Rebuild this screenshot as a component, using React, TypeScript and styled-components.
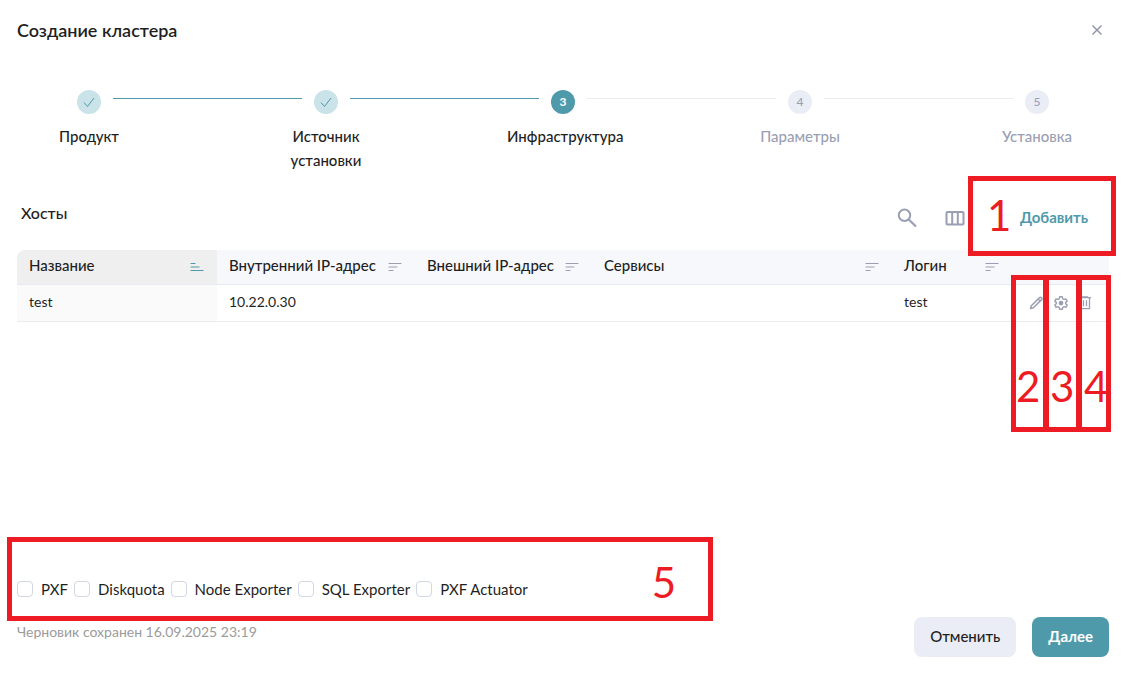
import React from "react";
import styled, { createGlobalStyle } from "styled-components";

const teal = "#4f9aaa";
const muted = "#9a9fb3";
const ink = "#1f1f1f";
const red = "#ed1c24";

const GlobalStyle = createGlobalStyle`
  *, *::before, *::after { box-sizing: border-box; }
  body { margin: 0; background: #fff; }
  body, button, input { font-family: Lato, "Noto Sans", sans-serif; }
`;

const Dialog = styled.main`
  display: flex;
  flex-direction: column;
  min-height: 100vh;
  padding: 18px 21px 18px 17px;
  color: ${ink};
  font-size: 14px;
  line-height: 24px;
`;

const Header = styled.header`
  display: flex;
  align-items: center;
  justify-content: space-between;
`;

const Title = styled.h1`
  margin: 0;
  font-size: 18px;
  font-weight: 600;
`;

const IconButton = styled.button<{ $size: number }>`
  display: flex;
  align-items: center;
  justify-content: center;
  width: ${(p) => p.$size}px;
  height: ${(p) => p.$size}px;
  padding: 0;
  border: 0;
  background: none;
  color: ${muted};
  cursor: pointer;
`;

const Stepper = styled.ol`
  display: flex;
  margin: 48px 0 0;
  padding: 0;
  list-style: none;
`;

const StepItem = styled.li`
  flex: 1;
  &:last-child { flex: 0 0 144px; }
`;

const StepTrack = styled.div`
  display: flex;
  padding-left: 60px;
`;

const StepCircle = styled.span<{ $state: string }>`
  display: flex;
  flex: none;
  align-items: center;
  justify-content: center;
  width: 24px;
  height: 24px;
  border-radius: 50%;
  font-size: 12px;
  font-weight: ${(p) => (p.$state === "current" ? 700 : 500)};
  background: ${(p) => (p.$state === "done" ? "#c9e3e9" : p.$state === "current" ? teal : "#eaedf5")};
  color: ${(p) => (p.$state === "done" ? teal : p.$state === "current" ? "#fff" : muted)};
`;

const StepLine = styled.span<{ $active: boolean }>`
  flex: 1;
  height: 1px;
  margin: 8px -48px 0 12px;
  background: ${(p) => (p.$active ? teal : "#ebebed")};
`;

const StepLabel = styled.div<{ $upcoming: boolean }>`
  width: 144px;
  padding: 10px 16px 0;
  text-align: center;
  font-size: 15px;
  font-weight: 500;
  color: ${(p) => (p.$upcoming ? muted : ink)};
`;

const Hosts = styled.section`
  flex: 1;
`;

const Toolbar = styled.div`
  position: relative;
  display: flex;
  align-items: center;
  justify-content: space-between;
  height: 44px;
  margin-top: 23px;
  padding: 0 4px;
`;

const SectionTitle = styled.h2`
  margin: 0 0 8px;
  font-size: 16px;
  font-weight: 500;
`;

const Tools = styled.div`
  display: flex;
  align-items: center;
  gap: 24px;
  padding-top: 2px;
`;

const AddButton = styled.button`
  width: 114px;
  padding: 0 16px 2px 28px;
  border: 0;
  background: none;
  color: ${teal};
  font-size: 15px;
  font-weight: 700;
  line-height: 24px;
  white-space: nowrap;
  cursor: pointer;
`;

const TableWrap = styled.div`
  position: relative;
  margin-top: 11px;
`;

const Table = styled.table`
  width: 100%;
  table-layout: fixed;
  border-collapse: separate;
  border-spacing: 0;
`;

const HeadCell = styled.th<{ $sorted?: boolean }>`
  height: 35px;
  padding: 0 13px 4px 12px;
  border-bottom: 1px solid #e9ebf3;
  background: ${(p) => (p.$sorted ? "#efefef" : "#f7f8fc")};
  font-size: 15px;
  font-weight: 500;
  text-align: left;
  white-space: nowrap;
  &:first-child { border-top-left-radius: 8px; }
`;

const HeadContent = styled.div`
  display: flex;
  align-items: center;
  justify-content: space-between;
  svg { margin-top: 4px; }
`;

const Cell = styled.td<{ $sorted?: boolean }>`
  height: 37px;
  padding: 0 12px 2px;
  border-bottom: 1px solid #ebebed;
  background: ${(p) => (p.$sorted ? "#fafafa" : "#fff")};
`;

const RowActions = styled.div`
  display: flex;
  gap: 1px;
  padding-top: 2px;
`;

const Components = styled.fieldset`
  position: relative;
  display: flex;
  gap: 6px;
  margin: 0;
  padding: 0;
  border: 0;
`;

const Option = styled.label`
  display: flex;
  align-items: center;
  gap: 8px;
  font-size: 15px;
  white-space: nowrap;
`;

const Checkbox = styled.input`
  appearance: none;
  width: 16px;
  height: 16px;
  margin: 0;
  border: 1px solid #d3d6e4;
  border-radius: 4px;
  background: #fff;
  &:checked { background: ${teal}; border-color: ${teal}; }
`;

const Footer = styled.footer`
  display: flex;
  align-items: flex-start;
  justify-content: space-between;
  margin-top: 16px;
`;

const DraftNote = styled.p`
  margin: 3px 0 0;
  color: #9b9b9b;
`;

const Actions = styled.div`
  display: flex;
  gap: 16px;
`;

const Button = styled.button<{ $primary?: boolean }>`
  height: 40px;
  padding: 0 16px 2px;
  border: 0;
  border-radius: 8px;
  background: ${(p) => (p.$primary ? teal : "#eaedf5")};
  color: ${(p) => (p.$primary ? "#fff" : ink)};
  font-size: 15px;
  font-weight: ${(p) => (p.$primary ? 700 : 500)};
  cursor: pointer;
`;

const Callout = styled.div`
  position: absolute;
  z-index: 1;
  border: 5px solid ${red};
  color: ${red};
  font-size: 42px;
  line-height: 48px;
  pointer-events: none;
`;

const AddCallout = styled(Callout)`
  top: -19px;
  right: -7px;
  width: 148px;
  height: 80px;
  padding: 10px 14px;
`;

const ActionCallouts = styled.div`
  position: absolute;
  top: 25px;
  right: -2px;
  width: 100px;
  height: 157px;
  pointer-events: none;
`;

const ActionCallout = styled(Callout)<{ $index: number }>`
  top: 0;
  left: ${(p) => p.$index * 33}px;
  width: ${(p) => (p.$index === 2 ? 34 : 37)}px;
  height: 157px;
  padding-top: 82px;
  text-indent: ${(p) => p.$index}px;
`;

const OptionsCallout = styled(Callout)`
  top: -40px;
  left: -10px;
  width: 706px;
  height: 84px;
  padding: 16px 32px;
  text-align: right;
`;

const CheckIcon = () => (
  <svg width="12" height="12" viewBox="0 0 12 12" fill="none" stroke="currentColor" aria-hidden="true">
    <path d="M1 6.500 4.500 10.500 11 2" />
  </svg>
);

const CloseIcon = () => (
  <svg width="12" height="12" viewBox="0 0 12 12" fill="none" stroke="#8a90a8" strokeWidth="1.4" aria-hidden="true">
    <path d="m1.500 1.500 9 9m0-9-9 9" />
  </svg>
);

const SearchIcon = () => (
  <svg width="20" height="20" viewBox="0 0 20 20" fill="none" stroke="currentColor" strokeWidth="2" aria-hidden="true">
    <circle cx="7.500" cy="7.200" r="5.700" />
    <path d="m11.700 11.500 7.300 7" strokeWidth="2.300" />
  </svg>
);

const ColumnsIcon = () => (
  <svg width="20" height="16" viewBox="0 0 20 16" fill="none" stroke="currentColor" strokeWidth="2" aria-hidden="true">
    <rect x="1.500" y="2" width="17" height="12.500" rx="1" />
    <path d="M7.200 2v12M12.800 2v12" />
  </svg>
);

const SortIcon = ({ ascending = false }: { ascending?: boolean }) => (
  <svg
    width="14"
    height="10"
    viewBox="0 0 14 10"
    fill="none"
    stroke={ascending ? teal : muted}
    strokeWidth="1.2"
    strokeLinecap="round"
    aria-hidden="true"
  >
    <path d={ascending ? "M1 1.5h4M1 5h8M1 8.5h12" : "M1 1.5h12M1 5h8M1 8.5h4"} />
  </svg>
);

const PencilIcon = () => (
  <svg width="16" height="16" viewBox="0 0 16 16" fill="none" stroke="currentColor" strokeWidth="1.500" strokeLinejoin="round" aria-hidden="true">
    <path d="m2.500 13.600.8-2.900 8.300-8.100a1.200 1.200 0 0 1 1.700 0l.3.300a1.200 1.200 0 0 1 0 1.700L5.400 12.800zM10.300 4l2 2" />
  </svg>
);

const GearIcon = () => (
  <svg width="16" height="16" viewBox="0 0 16 16" fill="none" stroke="currentColor" strokeWidth="1.400" strokeLinejoin="round" aria-hidden="true">
    <path d="M6.700 1.800h2.600l.4 1.900 1.300.8 1.900-.6 1.300 2.200-1.500 1.300v1.400l1.500 1.300-1.300 2.200-1.900-.6-1.300.8-.4 1.800H6.700l-.4-1.800-1.300-.8-1.900.6-1.300-2.200 1.500-1.300V7.400L1.800 6.100l1.300-2.200 1.900.6 1.300-.8z" />
    <circle cx="8" cy="8.100" r="1.700" fill="currentColor" />
  </svg>
);

const TrashIcon = () => (
  <svg width="16" height="16" viewBox="0 0 16 16" fill="none" stroke="currentColor" strokeWidth="1.300" aria-hidden="true">
    <path d="M2 2.700h12M5.500 3V1.800h5V3M3.500 3v10.600h9V3M6.500 5.200v6M9.500 5.200v6" />
  </svg>
);

const steps = [
  { label: "Продукт", state: "done" },
  { label: "Источник установки", state: "done" },
  { label: "Инфраструктура", state: "current" },
  { label: "Параметры", state: "upcoming" },
  { label: "Установка", state: "upcoming" },
];

const columns = [
  { label: "Название", width: 200, sorted: true },
  { label: "Внутренний IP-адрес", width: 198 },
  { label: "Внешний IP-адрес", width: 177 },
  { label: "Сервисы" },
  { label: "Логин", width: 120 },
];

const options = ["PXF", "Diskquota", "Node Exporter", "SQL Exporter", "PXF Actuator"];

export default function App() {
  return (
    <>
      <GlobalStyle />
      <Dialog>
        <Header>
          <Title>Создание кластера</Title>
          <IconButton $size={24} type="button" aria-label="Закрыть">
            <CloseIcon />
          </IconButton>
        </Header>

        <Stepper>
          {steps.map((step, i) => (
            <StepItem key={step.label} aria-current={step.state === "current" ? "step" : undefined}>
              <StepTrack>
                <StepCircle $state={step.state}>{step.state === "done" ? <CheckIcon /> : i + 1}</StepCircle>
                {i < steps.length - 1 && <StepLine $active={step.state === "done"} />}
              </StepTrack>
              <StepLabel $upcoming={step.state === "upcoming"}>{step.label}</StepLabel>
            </StepItem>
          ))}
        </Stepper>

        <Hosts>
          <Toolbar>
            <SectionTitle>Хосты</SectionTitle>
            <Tools>
              <IconButton $size={24} type="button" aria-label="Поиск">
                <SearchIcon />
              </IconButton>
              <IconButton $size={24} type="button" aria-label="Столбцы">
                <ColumnsIcon />
              </IconButton>
              <AddButton type="button">Добавить</AddButton>
            </Tools>
            <AddCallout>1</AddCallout>
          </Toolbar>

          <TableWrap>
            <Table>
              <colgroup>
                {columns.map((c) => (
                  <col key={c.label} width={c.width} />
                ))}
                <col width={97} />
              </colgroup>
              <thead>
                <tr>
                  {columns.map((c) => (
                    <HeadCell key={c.label} $sorted={c.sorted} scope="col">
                      <HeadContent>
                        {c.label}
                        <SortIcon ascending={c.sorted} />
                      </HeadContent>
                    </HeadCell>
                  ))}
                  <HeadCell as="td" />
                </tr>
              </thead>
              <tbody>
                <tr>
                  <Cell $sorted>test</Cell>
                  <Cell>10.22.0.30</Cell>
                  <Cell />
                  <Cell />
                  <Cell>test</Cell>
                  <Cell>
                    <RowActions>
                      <IconButton $size={24} type="button" aria-label="Изменить">
                        <PencilIcon />
                      </IconButton>
                      <IconButton $size={24} type="button" aria-label="Настроить">
                        <GearIcon />
                      </IconButton>
                      <IconButton $size={24} type="button" aria-label="Удалить">
                        <TrashIcon />
                      </IconButton>
                    </RowActions>
                  </Cell>
                </tr>
              </tbody>
            </Table>
            <ActionCallouts>
              {[2, 3, 4].map((n, i) => (
                <ActionCallout key={n} $index={i}>
                  {n}
                </ActionCallout>
              ))}
            </ActionCallouts>
          </TableWrap>
        </Hosts>

        <Components aria-label="Компоненты">
          {options.map((o) => (
            <Option key={o}>
              <Checkbox type="checkbox" />
              {o}
            </Option>
          ))}
          <OptionsCallout>5</OptionsCallout>
        </Components>

        <Footer>
          <DraftNote>Черновик сохранен 16.09.2025 23:19</DraftNote>
          <Actions>
            <Button type="button">Отменить</Button>
            <Button type="button" $primary>
              Далее
            </Button>
          </Actions>
        </Footer>
      </Dialog>
    </>
  );
}
